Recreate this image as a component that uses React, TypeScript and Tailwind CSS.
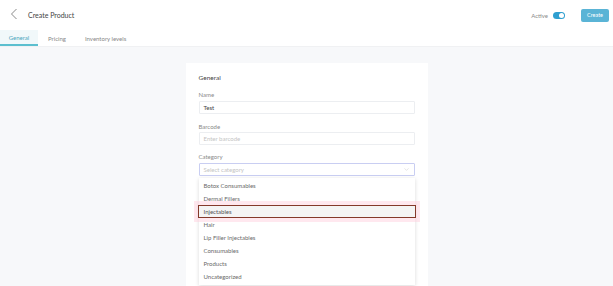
import { ChevronDown } from 'lucide-react';

const categories = [
  'Botox Consumables',
  'Dermal Fillers',
  'Injectables',
  'Hair',
  'Lip Filler Injectables',
  'Consumables',
  'Products',
  'Uncategorized',
];

export default function App() {
  return (
    <div className="flex h-[286px] w-[613px] flex-col overflow-hidden bg-[#f7f8fa] font-['Lato',sans-serif] text-[#4a4a4a]">
      {/* HEADER */}
      <header className="flex h-[30px] shrink-0 items-center bg-white pr-[4px] pl-[10px]">
        <svg width="8" height="12" viewBox="0 0 8 12" fill="none" className="mb-[2px]">
          <path d="M6.5 1 L1.5 6 L6.5 11" stroke="#8a8a8a" strokeWidth="1" />
        </svg>
        <h1 className="ml-[10px] text-[7px] text-[#444]">Create Product</h1>
        <div className="ml-auto flex items-center">
          <span className="text-[6px] text-[#8a8a8a]">Active</span>
          <span className="ml-[5px] flex h-[7px] w-[12px] items-center justify-end rounded-full bg-[#2f9fd0] pr-[1px]">
            <span className="h-[5px] w-[5px] rounded-full bg-white" />
          </span>
          <button className="ml-[16px] h-[13px] w-[28px] rounded-[2px] bg-[#5ab4d6] text-[5.5px] text-white">
            Create
          </button>
        </div>
      </header>

      {/* TABS */}
      <nav className="flex h-[17px] shrink-0 items-stretch border-b border-[#f0f1f3] bg-white text-[6px] text-[#888]">
        <span className="flex w-[38px] items-center justify-center border-b-2 border-[#5cbfcf] bg-[#f1f8fa] text-[#4aa6bd]">
          General
        </span>
        <span className="ml-[10px] flex items-center">Pricing</span>
        <span className="ml-[19px] flex items-center">Inventory levels</span>
      </nav>

      {/* CONTENT */}
      <main className="flex min-h-0 flex-1 justify-center pt-[16px]">
        <section className="h-[400px] w-[242px] shrink-0 bg-white px-[13px] pt-[10px]">
          <h2 className="h-[10px] text-[6.5px] leading-[10px] text-[#444]">General</h2>

          <label className="mt-[7px] block h-[10px] text-[6px] leading-[10px] text-[#8a8a8a]">Name</label>
          <div className="mt-[1px] flex h-[13px] items-center rounded-[1px] border border-[#eceef1] px-[4px] text-[6px] text-[#444]">
            Test
          </div>

          <label className="mt-[8px] block h-[10px] text-[6px] leading-[10px] text-[#8a8a8a]">Barcode</label>
          <div className="flex h-[13px] items-center rounded-[1px] border border-[#eceef1] px-[4px] text-[6px] text-[#c4c4c4]">
            Enter barcode
          </div>

          <label className="mt-[7px] block h-[10px] text-[6px] leading-[10px] text-[#8a8a8a]">Category</label>
          <div className="relative mt-[1px]">
            <div className="flex h-[13px] items-center rounded-[1px] border border-[#c9cef2] px-[4px] text-[6px] text-[#c4c4c4]">
              Select category
              <ChevronDown className="ml-auto h-[7px] w-[7px] text-[#c4c4c4]" strokeWidth={1.5} />
            </div>

            {/* DROPDOWN */}
            <ul className="absolute top-[15px] right-0 left-0 bg-white pt-[1px] pb-[2px] text-[6px] text-[#6a6a6a] shadow-[0_1px_4px_rgba(0,0,0,0.15)]">
              {categories.map((c) =>
                c === 'Injectables' ? (
                  <li
                    key={c}
                    className="-mx-[1px] flex h-[13px] items-center border-[1.5px] border-[#84392a] bg-[#f4f4f4] pl-[5px] text-[#555] shadow-[0_0_0_4px_rgba(255,205,220,0.45)]"
                  >
                    {c}
                  </li>
                ) : (
                  <li key={c} className="flex h-[13px] items-center pl-[5px]">
                    {c}
                  </li>
                ),
              )}
            </ul>
          </div>
        </section>
      </main>
    </div>
  );
}
